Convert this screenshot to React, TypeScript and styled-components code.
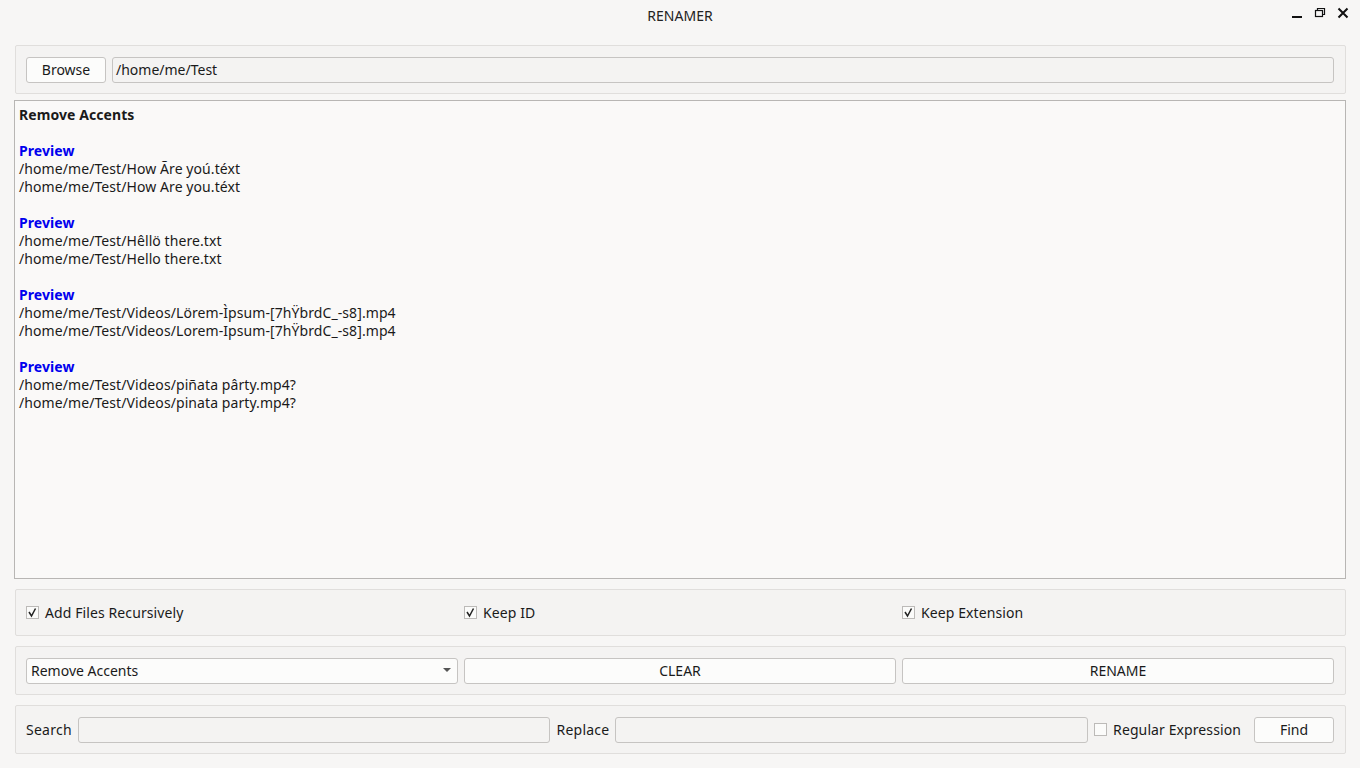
import React from "react";
import styled, { createGlobalStyle } from "styled-components";

const Global = createGlobalStyle`
  html, body { margin: 0; padding: 0; background: #f7f6f5; }
  body { font-family: "Noto Sans", "DejaVu Sans", sans-serif; font-size: 14px; color: #1a1a1a; }
  * { box-sizing: border-box; }
`;

const Window = styled.div`
  width: 1360px;
  height: 768px;
  display: flex;
  flex-direction: column;
  background: #f7f6f5;
  overflow: hidden;
`;

const TitleBar = styled.div`
  height: 30px;
  display: flex;
  align-items: center;
  justify-content: center;
  position: relative;
  font-size: 14px;
  color: #222;
`;

const WinControls = styled.div`
  position: absolute;
  right: 10px;
  top: 6px;
  display: flex;
  gap: 9px;
  align-items: center;
`;

const Content = styled.div`
  flex: 1;
  display: flex;
  flex-direction: column;
  padding: 15px 14px 14px 14px;
  gap: 6px;
`;

const Group = styled.div<{ $mt?: number; $h?: number }>`
  margin-left: 1px;
  background: #f4f3f2;
  border: 1px solid #e0dedc;
  border-radius: 2px;
  display: flex;
  align-items: center;
  gap: 6px;
  padding: 0 11px 0 10px;
  height: ${(p) => p.$h ?? 49}px;
  margin-top: ${(p) => p.$mt ?? 0}px;
`;

const Button = styled.button<{ $w?: number; $grow?: boolean }>`
  height: 26px;
  width: ${(p) => (p.$w ? `${p.$w}px` : "0")};
  flex: ${(p) => (p.$grow ? "1 1 0" : "0 0 auto")};
  background: #fcfcfb;
  border: 1px solid #c6c4c2;
  border-radius: 3px;
  font-family: inherit;
  font-size: 14px;
  color: #1a1a1a;
  padding: 0;
`;

const FindButton = styled(Button)`
  margin-left: 7px;
`;

const Input = styled.div`
  height: 26px;
  flex: 1 1 0;
  width: 0;
  background: #f4f3f2;
  border: 1px solid #c6c4c2;
  border-radius: 3px;
  padding: 0 3px;
  display: flex;
  align-items: center;
  font-size: 14px;
`;

const Preview = styled.div`
  height: 479px;
  background: #faf9f8;
  border: 1px solid #b8b6b4;
  padding: 5px 4px;
  line-height: 18px;
  font-size: 14px;
  letter-spacing: 0.08px;
`;

const Bold = styled.div`
  font-weight: 700;
`;

const Heading = styled.div`
  font-weight: 700;
  color: #0000ee;
  margin-top: 18px;
`;

const Line = styled.div``;

const CheckRow = styled.label<{ $flex?: string }>`
  display: flex;
  align-items: center;
  gap: 6px;
  flex: ${(p) => p.$flex ?? "1 1 0"};
  letter-spacing: 0.1px;
`;

const Box = styled.span`
  width: 13px;
  height: 13px;
  border: 1px solid #bcbab8;
  background: #fbfbfa;
  display: inline-flex;
  align-items: center;
  justify-content: center;
`;

const Combo = styled.div`
  height: 26px;
  flex: 1 1 0;
  width: 0;
  background: #fcfcfb;
  border: 1px solid #c6c4c2;
  border-radius: 3px;
  display: flex;
  align-items: center;
  justify-content: space-between;
`;

const ComboText = styled.span`
  margin-left: 4px;
`;

const ComboArrow = styled.svg`
  margin-right: 6px;
`;

const Label = styled.span`
  flex: 0 0 auto;
  letter-spacing: 0.25px;
`;

const Check = ({ on }: { on: boolean }) => (
  <Box>
    {on && (
      <svg width="11" height="11" viewBox="0 0 11 11">
        <path d="M2 5 L4.5 9 L8.5 1.5" fill="none" stroke="#222" strokeWidth="1.5" />
      </svg>
    )}
  </Box>
);

const groups = [
  ["/home/me/Test/How Ãre yoú.téxt", "/home/me/Test/How Are you.téxt"],
  ["/home/me/Test/Hêllö there.txt", "/home/me/Test/Hello there.txt"],
  ["/home/me/Test/Videos/Lörem-Ìpsum-[7hŸbrdC_-s8].mp4", "/home/me/Test/Videos/Lorem-Ipsum-[7hŸbrdC_-s8].mp4"],
  ["/home/me/Test/Videos/piñata pârty.mp4?", "/home/me/Test/Videos/pinata party.mp4?"],
];

export default function App() {
  return (
    <Window>
      <Global />
      <TitleBar>
        RENAMER
        <WinControls>
          <svg width="14" height="14" viewBox="0 0 14 14">
            <rect x="2" y="10" width="10" height="2" fill="#111" />
          </svg>
          <svg width="14" height="14" viewBox="0 0 14 14">
            <rect x="2.5" y="4.5" width="7" height="6" fill="none" stroke="#111" strokeWidth="1.2" />
            <path d="M4.5 4.5 V2.5 H11.5 V8.5 H9.5" fill="none" stroke="#111" strokeWidth="1.2" />
          </svg>
          <svg width="14" height="14" viewBox="0 0 14 14">
            <path d="M2.5 2.5 L11.5 11.5 M11.5 2.5 L2.5 11.5" stroke="#111" strokeWidth="2" />
          </svg>
        </WinControls>
      </TitleBar>
      <Content>
        <Group>
          <Button $w={80}>Browse</Button>
          <Input>/home/me/Test</Input>
        </Group>
        <Preview>
          <Bold>Remove Accents</Bold>
          {groups.map((g, i) => (
            <React.Fragment key={i}>
              <Heading>Preview</Heading>
              <Line>{g[0]}</Line>
              <Line>{g[1]}</Line>
            </React.Fragment>
          ))}
        </Preview>
        <Group $mt={4} $h={47}>
          <CheckRow>
            <Check on />
            Add Files Recursively
          </CheckRow>
          <CheckRow>
            <Check on />
            Keep ID
          </CheckRow>
          <CheckRow>
            <Check on />
            Keep Extension
          </CheckRow>
        </Group>
        <Group $mt={4}>
          <Combo>
            <ComboText>Remove Accents</ComboText>
            <ComboArrow width="8" height="5" viewBox="0 0 8 5">
              <path d="M0 0 H8 L4 4 Z" fill="#555" />
            </ComboArrow>
          </Combo>
          <Button $grow>CLEAR</Button>
          <Button $grow>RENAME</Button>
        </Group>
        <Group $mt={4}>
          <Label>Search</Label>
          <Input />
          <Label>Replace</Label>
          <Input />
          <CheckRow $flex="0 0 auto">
            <Check on={false} />
            Regular Expression
          </CheckRow>
          <FindButton $w={80}>Find</FindButton>
        </Group>
      </Content>
    </Window>
  );
}
